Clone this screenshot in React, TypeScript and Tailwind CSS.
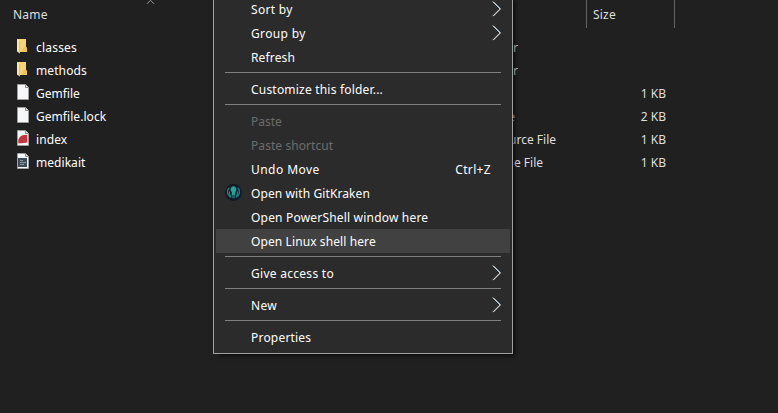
import React from "react";

type FileKind = "folder" | "blank" | "ruby" | "script";

interface FileEntry {
  name: string;
  kind: FileKind;
  type: string;
  typeWidth: string;
  size?: string;
  tracking: string;
}

const files: FileEntry[] = [
  { name: "classes", kind: "folder", type: "r", typeWidth: "w-[518px]", tracking: "tracking-[0.2px]" },
  { name: "methods", kind: "folder", type: "r", typeWidth: "w-[518px]", tracking: "tracking-[0.1px]" },
  { name: "Gemfile", kind: "blank", type: "", typeWidth: "w-[518px]", size: "1 KB", tracking: "" },
  { name: "Gemfile.lock", kind: "blank", type: "e", typeWidth: "w-[515px]", size: "2 KB", tracking: "tracking-[0.05px]" },
  { name: "index", kind: "ruby", type: "urce File", typeWidth: "w-[556px]", size: "1 KB", tracking: "tracking-[0.1px]" },
  { name: "medikait", kind: "script", type: "e File", typeWidth: "w-[543px]", size: "1 KB", tracking: "tracking-[0.05px]" },
];

function FileIcon({ kind }: { kind: FileKind }) {
  if (kind === "folder") {
    return (
      <svg width="16" height="16" viewBox="0 0 16 16" className="mb-[3px] shrink-0">
        <path d="M1 1H10V9L11 10V14H4L1 13Z" fill="#f5d476" />
        <path d="M8 9H10L11 10V14H5Z" fill="#eec35b" />
        <path d="M1 1L4 3V15.5L1 13.5Z" fill="#ffe8a3" />
        <path d="M4 3V15.5L3.2 15V3Z" fill="#d9b65c" />
      </svg>
    );
  }
  return (
    <svg width="16" height="16" viewBox="0 0 16 16" className="mb-[3px] shrink-0">
      <path d="M1.5 .5H9.5L12.5 3.5V15.5H1.5Z" fill="#f6f7f8" />
      <path d="M1.5 15.5V.5H9.5L12.5 3.5V15.5Z" fill="none" stroke="#a3a3a3" strokeWidth=".8" />
      <path d="M9.5 .5V3.5H12.5" fill="#dedede" stroke="#8d8d8d" />
      {kind === "ruby" && <path d="M2.3 13.2V9.5L4 6.7L6.5 5.3L10 4.7L11.2 5.2V12.5Q6.5 13.6 2.3 13.2Z" fill="#c2363d" />}
      {kind === "script" && (
        <g>
          <path d="M2 5H11V14H2Z" fill="#3d4c58" />
          <path d="M4 7.5H7M4 9.5H10M4 11.5H8" stroke="#a3afb6" strokeWidth=".8" />
        </g>
      )}
    </svg>
  );
}

function Chevron() {
  return (
    <svg width="10" height="16" viewBox="0 0 10 16" className="shrink-0">
      <path d="M.7 .7L7.9 7.9L.7 15.1" fill="none" stroke="#83bce8" />
      <path d="M1.3 .7L8.5 7.9L1.3 15.1" fill="none" stroke="#f4e5d8" />
    </svg>
  );
}

function KrakenIcon() {
  return (
    <svg width="17" height="17" viewBox="0 0 18 18" className="mb-px shrink-0">
      <circle cx="9" cy="9" r="8.9" fill="#141827" />
      <path d="M9 2.5C6.8 2.5 5.8 4.5 6 6.5L7.2 9V12H8V15H10V12H10.8V9L12 6.5C12.2 4.5 11.2 2.5 9 2.5Z" fill="#20a69c" />
      <path d="M4.5 4C1.8 7 2 11.5 5.5 13.8M13.5 4C16.2 7 16 11.5 12.5 13.8M5.2 8C4 10 4.7 12 6.5 14.2M12.8 8C14 10 13.3 12 11.5 14.2" stroke="#188a84" strokeWidth="1.3" fill="none" />
      <path d="M9 11V15" stroke="#141827" strokeWidth=".5" />
    </svg>
  );
}

interface ItemProps {
  label: string;
  tracking?: string;
  disabled?: boolean;
  active?: boolean;
  submenu?: boolean;
  shortcut?: string;
  icon?: boolean;
}

function MenuItem({ label, tracking = "", disabled, active, submenu, shortcut, icon }: ItemProps) {
  return (
    <div className={`mx-[2px] flex h-6 shrink-0 items-center pl-[9px] pr-[8px] ${active ? "bg-[#414141]" : ""} ${disabled ? "text-[#6d6d6d]" : "text-white"}`}>
      <span className="flex w-[26px] shrink-0">{icon && <KrakenIcon />}</span>
      <span className={`grow pt-[2px] ${tracking}`}>{label}</span>
      {shortcut && <span className="mr-[11px] pt-[2px] tracking-[0.35px]">{shortcut}</span>}
      {submenu && <Chevron />}
    </div>
  );
}

function Separator() {
  return (
    <div className="h-2 shrink-0 pl-[11px] pr-[11px] pt-[3px]">
      <div className="h-px bg-[#808080]" />
    </div>
  );
}

export default function App() {
  return (
    <div className="relative h-[413px] w-[778px] overflow-hidden whitespace-nowrap bg-[#202020] font-['Noto_Sans',sans-serif] text-[12px] leading-4 text-white">
      <header className="relative flex h-7 items-center text-[#dedede]">
        <span className="w-[586px] pl-[13px] pt-[2px] tracking-[0.2px]">Name</span>
        <span className="flex h-7 w-[89px] items-center border-x border-[#636363] pl-[6px] pt-[2px] tracking-[0.2px]">Size</span>
        <svg width="10" height="5" viewBox="0 0 10 5" className="absolute left-[146px] top-0">
          <path d="M1 3.8L4.5 .3L8 3.8" fill="none" stroke="#a0a0a0" />
        </svg>
      </header>
      <main className="pt-2">
        {files.map((file) => (
          <div key={file.name} className="flex h-[23px] items-center">
            <div className="flex w-[213px] shrink-0 items-center gap-[4px] pl-4">
              <FileIcon kind={file.kind} />
              <span className={file.tracking}>{file.name}</span>
            </div>
            <div className="w-[373px] shrink-0 text-[#dedede]">
              <div className={`-ml-[213px] text-right ${file.typeWidth}`}>{file.type}</div>
            </div>
            <div className="w-[80px] text-right text-[#dedede]">{file.size}</div>
          </div>
        ))}
      </main>
      <nav className="absolute -top-[6px] left-[213px] flex h-[360px] w-[300px] flex-col border border-[#a0a0a0] bg-[#2b2b2b] pt-[2px] shadow-[4px_4px_4px_-2px_rgba(0,0,0,0.65)]">
        <MenuItem label="Sort by" tracking="tracking-[0.3px]" submenu />
        <MenuItem label="Group by" tracking="tracking-[0.35px]" submenu />
        <MenuItem label="Refresh" tracking="tracking-[0.15px]" />
        <Separator />
        <MenuItem label="Customize this folder..." tracking="tracking-[0.2px]" />
        <Separator />
        <MenuItem label="Paste" disabled />
        <MenuItem label="Paste shortcut" tracking="tracking-[0.07px]" disabled />
        <MenuItem label="Undo Move" tracking="tracking-[0.45px]" shortcut="Ctrl+Z" />
        <MenuItem label="Open with GitKraken" tracking="tracking-[0.1px]" icon />
        <MenuItem label="Open PowerShell window here" tracking="tracking-[0.19px]" />
        <MenuItem label="Open Linux shell here" tracking="tracking-[0.1px]" active />
        <Separator />
        <MenuItem label="Give access to" tracking="tracking-[0.28px]" submenu />
        <Separator />
        <MenuItem label="New" tracking="tracking-[0.3px]" submenu />
        <Separator />
        <MenuItem label="Properties" tracking="tracking-[0.2px]" />
      </nav>
    </div>
  );
}
